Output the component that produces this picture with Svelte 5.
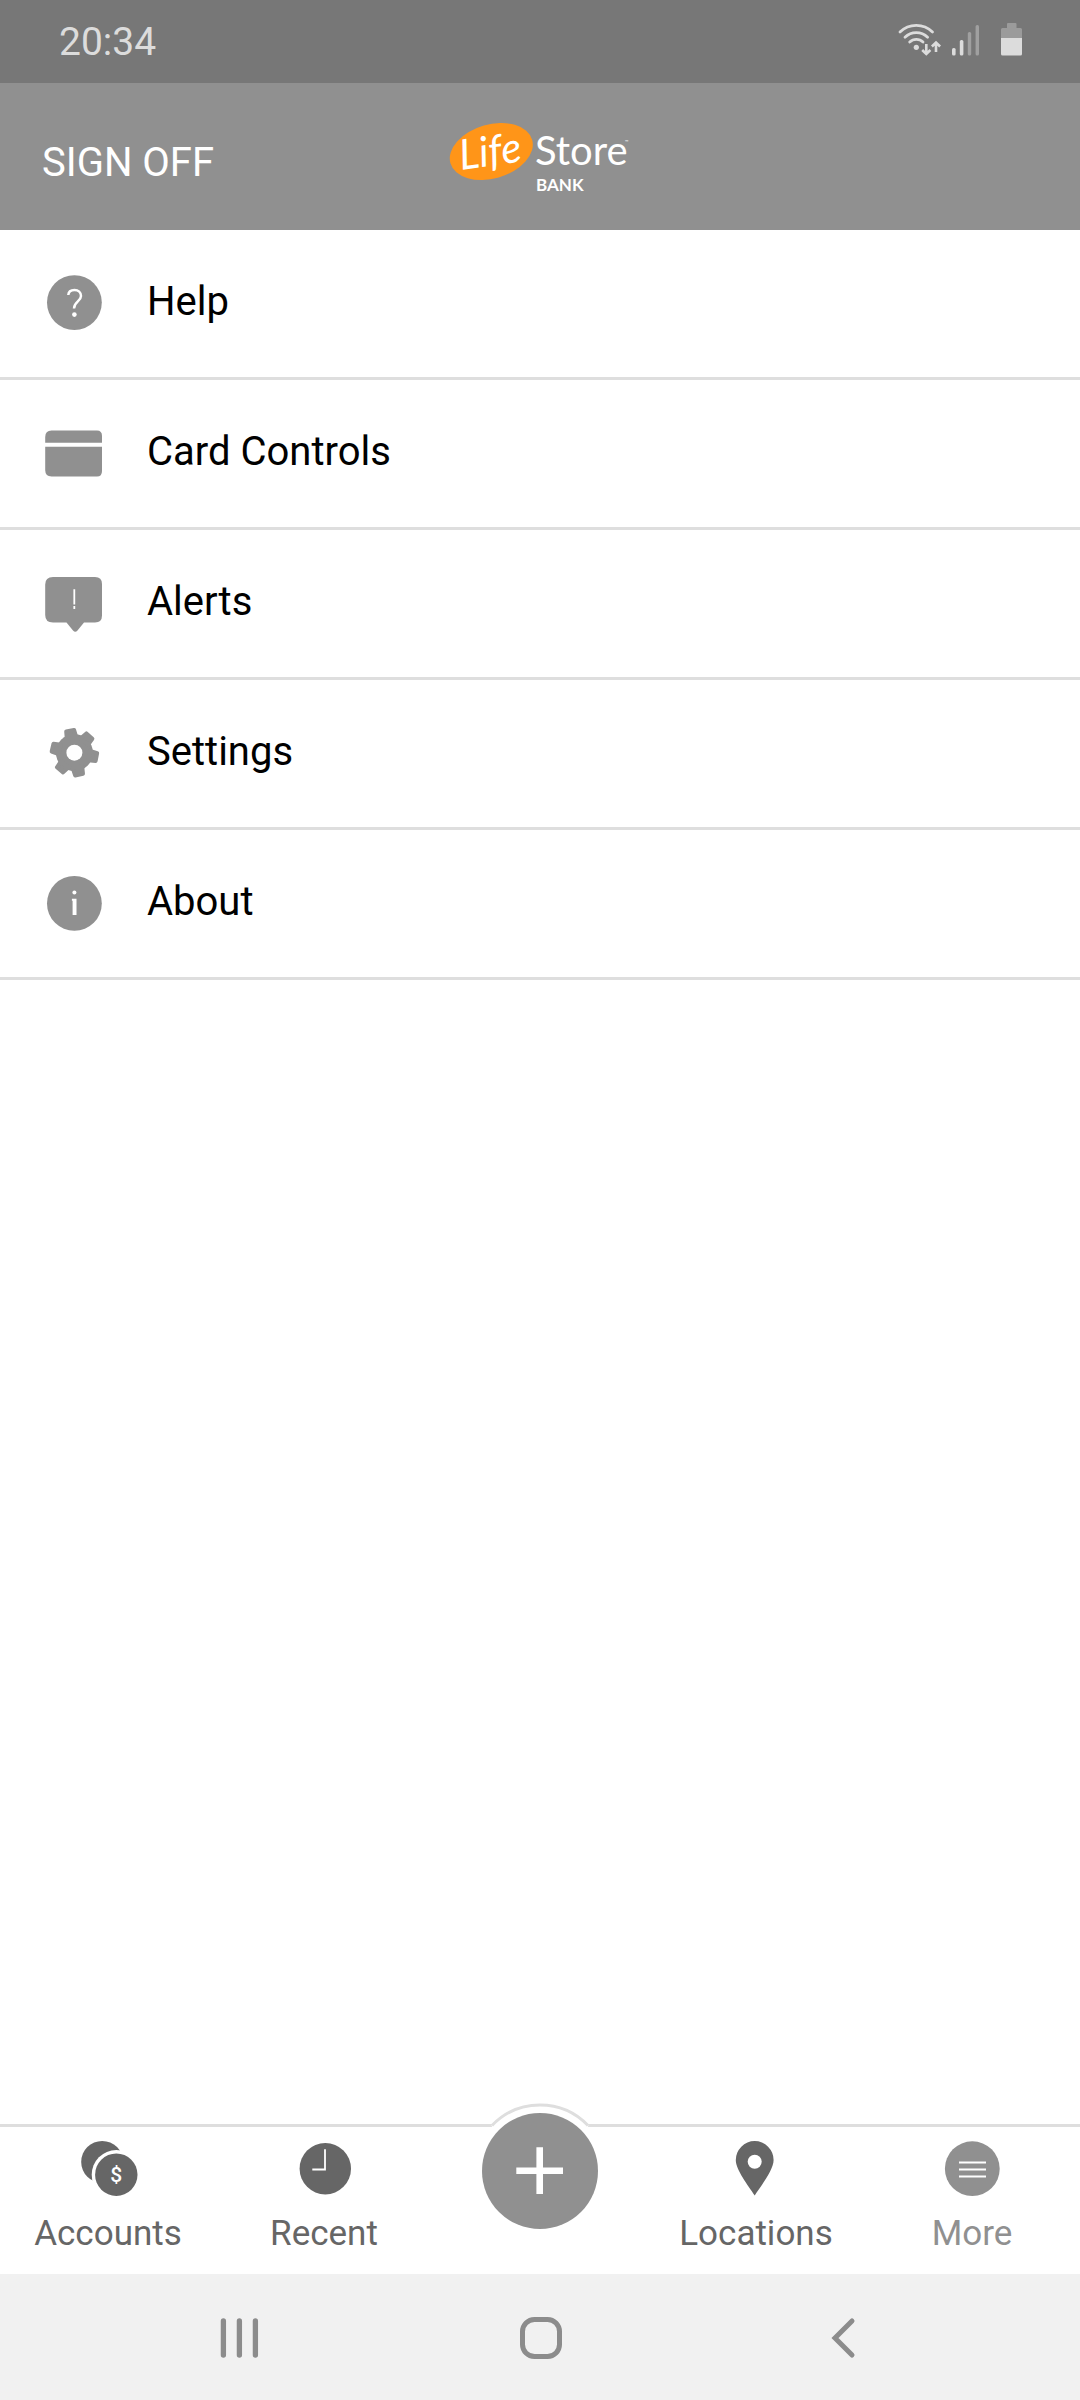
<script lang="ts">
  const menu = ['Help', 'Card Controls', 'Alerts', 'Settings', 'About'];
  const teeth = [-11, 42, 101, 168, 220, 283];
</script>

<div class="screen">
  <div class="status">
    <span class="clock">20:34</span>
    <div class="indicators">
      <svg width="44" height="37" viewBox="898 23 44 37" fill="none" stroke="#dcdcdc" stroke-width="2.8" stroke-linecap="round" role="img" aria-label="Wi-Fi">
        <path d="M900 32A23 23 0 0 1 932.5 32M905 37.2A16 16 0 0 1 927.6 37.2M909.7 42A9.5 9.5 0 0 1 923 42" />
        <circle cx="916.3" cy="47.3" r="2.6" fill="#dcdcdc" stroke="none" />
        <path stroke-width="2.6" stroke-linecap="butt" d="M926.3 44V54M922.2 50L926.3 54L930.4 50M936 52V42.5M931.9 46.5L936 42.5L940.1 46.5" />
      </svg>
      <svg width="28" height="37" viewBox="952 23 28 37" role="img" aria-label="Signal">
        <g fill="#dcdcdc">
          <rect x="952" y="48" width="3.6" height="7.4" rx="1.5" />
          <rect x="959.8" y="40" width="3.6" height="15.4" rx="1.5" />
        </g>
        <g fill="#a0a0a0">
          <rect x="967.8" y="32" width="3.4" height="23.4" rx="1.5" />
          <rect x="975.6" y="25" width="3.4" height="30.4" rx="1.5" />
        </g>
      </svg>
      <svg width="32" height="37" viewBox="990 23 32 37" role="img" aria-label="Battery">
        <path fill="#9b9b9b" d="M1007 28V24Q1007 23 1008 23H1015.5Q1016.5 23 1016.5 24V28H1020.5Q1022 28 1022 29.5V38H1001V29.5Q1001 28 1002.5 28Z" />
        <path fill="#dcdcdc" d="M1001 38H1022V54Q1022 55.6 1020.5 55.6H1002.5Q1001 55.6 1001 54Z" />
      </svg>
    </div>
  </div>

  <header>
    <button class="signoff">SIGN OFF</button>
    <svg class="logo" width="184" height="80" viewBox="-2 -5 184 80" role="img" aria-label="LifeStore Bank">
      <ellipse cx="41.3" cy="29.5" rx="42.5" ry="27" transform="rotate(-16 41.3 29.5)" fill="#ff9518" />
      <g fill="#fff">
        <text class="life" x="11" y="48" transform="rotate(-8 11 48)">Life</text>
        <text class="store" x="85" y="43">Store</text>
        <text class="bank" x="86" y="69">BANK</text>
        <text class="tm" x="175" y="22">™</text>
      </g>
    </svg>
  </header>

  <main>
    <ul class="menu">
      {#each menu as item}
        <li>
          <button class="row">
            <svg width="60" height="59" viewBox="0 0 60 59" fill="#909090" aria-hidden="true">
              {#if item === 'Help'}
                <circle cx="29.4" cy="28.6" r="27.4" />
                <path d="M23.3 21C23.5 17.8 26 16 29.5 16C33.3 16 36 18.4 36 22C36 27.5 29 27.5 29 34.5" fill="none" stroke="#fff" stroke-width="2.5" />
                <circle cx="29.4" cy="40.6" r="2.3" fill="#fff" />
              {:else if item === 'Card Controls'}
                <path d="M0.2 18.7V13Q0.2 6.5 6.5 6.5H52Q57 6.5 57 12V18.7Z" />
                <path d="M0.2 22.7H57V47Q57 52.5 52 52.5H6.5Q0.2 52.5 0.2 46Z" />
              {:else if item === 'Alerts'}
                <path d="M8 3H50Q57 3 57 10V41.5Q57 48.5 50 48.5H39L32.5 56.5Q30.3 59 28 56.5L21.5 48.5H8Q0.2 48.5 0.2 41V10.5Q0.2 3 8 3Z" />
                <path d="M29.3 15.3V30.5M29.3 32V35" stroke="#fff" stroke-width="1.8" />
              {:else if item === 'Settings'}
                <g transform="translate(29.4 28.7)" stroke="#909090">
                  <circle r="18.5" stroke="none" />
                  {#each teeth as angle}
                    <path d="M-4 -22.4H4L4.8 -15H-4.8Z" stroke-width="4" stroke-linejoin="round" transform="rotate({angle})" />
                  {/each}
                  <circle r="8" fill="#fff" stroke="none" />
                </g>
              {:else}
                <circle cx="29.4" cy="29.4" r="27.4" />
                <path d="M26.9 24.7H31.5V41H27.6V26.7H26.9Z" fill="#fff" />
                <circle cx="29.4" cy="18.5" r="2" fill="#fff" />
              {/if}
            </svg>
            <span>{item}</span>
          </button>
        </li>
      {/each}
    </ul>
  </main>

  <nav class="tabs" aria-label="Main">
    <button class="tab">
      <svg width="60" height="60" viewBox="0 0 60 60" fill="#666" aria-hidden="true">
        <circle cx="24.2" cy="22.9" r="21" />
        <circle cx="38.3" cy="35.7" r="24.6" fill="#fff" />
        <circle cx="38.3" cy="35.7" r="21.2" />
        <text class="coin" x="38.3" y="43" text-anchor="middle">$</text>
      </svg>
      <span>Accounts</span>
    </button>
    <button class="tab">
      <svg width="60" height="60" viewBox="0 0 60 60" fill="#666" aria-hidden="true">
        <circle cx="31.3" cy="29.7" r="25.7" />
        <path d="M31 10.3V30.5H18.3" fill="none" stroke="#fff" stroke-width="1.8" />
      </svg>
      <span>Recent</span>
    </button>
    <button class="add" aria-label="Add">
      <svg width="140" height="130" viewBox="0 0 140 130" aria-hidden="true">
        <path d="M21.5 24.5A66.5 66.5 0 0 1 118.5 24.5L116 30H24Z" fill="#fff" />
        <path d="M22 24.5A66.5 66.5 0 0 1 118 24.5" fill="none" stroke="#dedede" stroke-width="3" />
        <circle cx="70" cy="70" r="58" fill="#909090" />
        <path d="M69.7 46.3V93M46.3 69.7H93" stroke="#fff" stroke-width="6.6" />
      </svg>
    </button>
    <button class="tab">
      <svg width="60" height="60" viewBox="0 0 60 60" fill="#666" aria-hidden="true">
        <path d="M28.7 56.5C22 46 9.8 31 9.8 21A18.9 18.9 0 0 1 47.6 21C47.6 31 35.4 46 28.7 56.5Z" />
        <circle cx="28.7" cy="22.7" r="7" fill="#fff" />
      </svg>
      <span>Locations</span>
    </button>
    <button class="tab active" aria-current="page">
      <svg width="60" height="60" viewBox="0 0 60 60" fill="#909090" aria-hidden="true">
        <circle cx="30.3" cy="29.7" r="27.4" />
        <path d="M17 23.5H44M17 30.5H44M17 37.5H44" stroke="#fff" stroke-width="1.8" />
      </svg>
      <span>More</span>
    </button>
  </nav>

  <div class="system">
    <button aria-label="Recent apps">
      <svg width="60" height="60" viewBox="0 0 60 60" fill="none" stroke="#8c8c8c" stroke-width="5.3" stroke-linecap="round">
        <path d="M15.4 14V48M31.4 14V48M47.4 14V48" />
      </svg>
    </button>
    <button aria-label="Home">
      <svg width="60" height="60" viewBox="0 0 60 60" fill="none" stroke="#8c8c8c" stroke-width="5">
        <rect x="12.5" y="12.5" width="37" height="37" rx="12" />
      </svg>
    </button>
    <button aria-label="Back">
      <svg width="60" height="60" viewBox="0 0 60 60" fill="none" stroke="#8c8c8c" stroke-width="5" stroke-linecap="round">
        <path d="M40 14L23 31L40 48" />
      </svg>
    </button>
  </div>
</div>

<style>
  :global(body) {
    margin: 0;
    background: #fff;
  }
  .screen {
    min-height: 100vh;
    display: flex;
    flex-direction: column;
    font-family: Roboto, 'Liberation Sans', sans-serif;
    font-size: 40px;
    line-height: 48px;
    color: #000;
  }
  button {
    margin: 0;
    padding: 0;
    border: 0;
    background: none;
    color: inherit;
    font: inherit;
    cursor: pointer;
  }
  svg {
    display: block;
    flex: none;
  }
  .status {
    height: 83px;
    padding: 0 58px 0 59px;
    display: flex;
    align-items: center;
    justify-content: space-between;
    background: #777;
    color: #dcdcdc;
  }
  .clock {
    font-size: 39px;
  }
  .indicators {
    display: flex;
    gap: 10px;
  }
  header {
    height: 147px;
    padding: 0 42px;
    display: grid;
    grid-template-columns: 1fr auto 1fr;
    align-items: center;
    background: #909090;
    color: #fff;
  }
  .signoff {
    justify-self: start;
    padding-top: 12px;
  }
  .life {
    font: italic 400 42px Lato, sans-serif;
  }
  .store {
    font: 400 40px Lato, sans-serif;
  }
  .bank {
    font: 700 17px Lato, sans-serif;
  }
  .tm {
    font: 400 6px Roboto, sans-serif;
  }
  main {
    flex: 1;
  }
  .menu {
    margin: 0;
    padding: 0;
    list-style: none;
  }
  .menu li {
    border-bottom: 3px solid #dedede;
  }
  .row {
    width: 100%;
    height: 147px;
    padding: 0 45px;
    display: flex;
    align-items: center;
    gap: 42px;
    text-align: left;
  }
  .row span {
    padding-bottom: 4px;
  }
  .tabs {
    height: 147px;
    display: grid;
    grid-template-columns: repeat(5, 1fr);
    align-items: start;
    border-top: 3px solid #dedede;
    font-size: 35px;
    line-height: 40px;
    color: #666;
  }
  .tab {
    padding-top: 12px;
    display: flex;
    flex-direction: column;
    align-items: center;
    gap: 15px;
  }
  .active {
    color: #909090;
  }
  .add {
    margin-top: -26px;
    justify-self: center;
  }
  .coin {
    font: 500 21px Roboto, sans-serif;
    fill: #fff;
  }
  .system {
    height: 126px;
    display: grid;
    grid-template-columns: repeat(3, 28%);
    justify-content: center;
    align-items: center;
    justify-items: center;
    background: #f1f1f1;
  }
</style>
